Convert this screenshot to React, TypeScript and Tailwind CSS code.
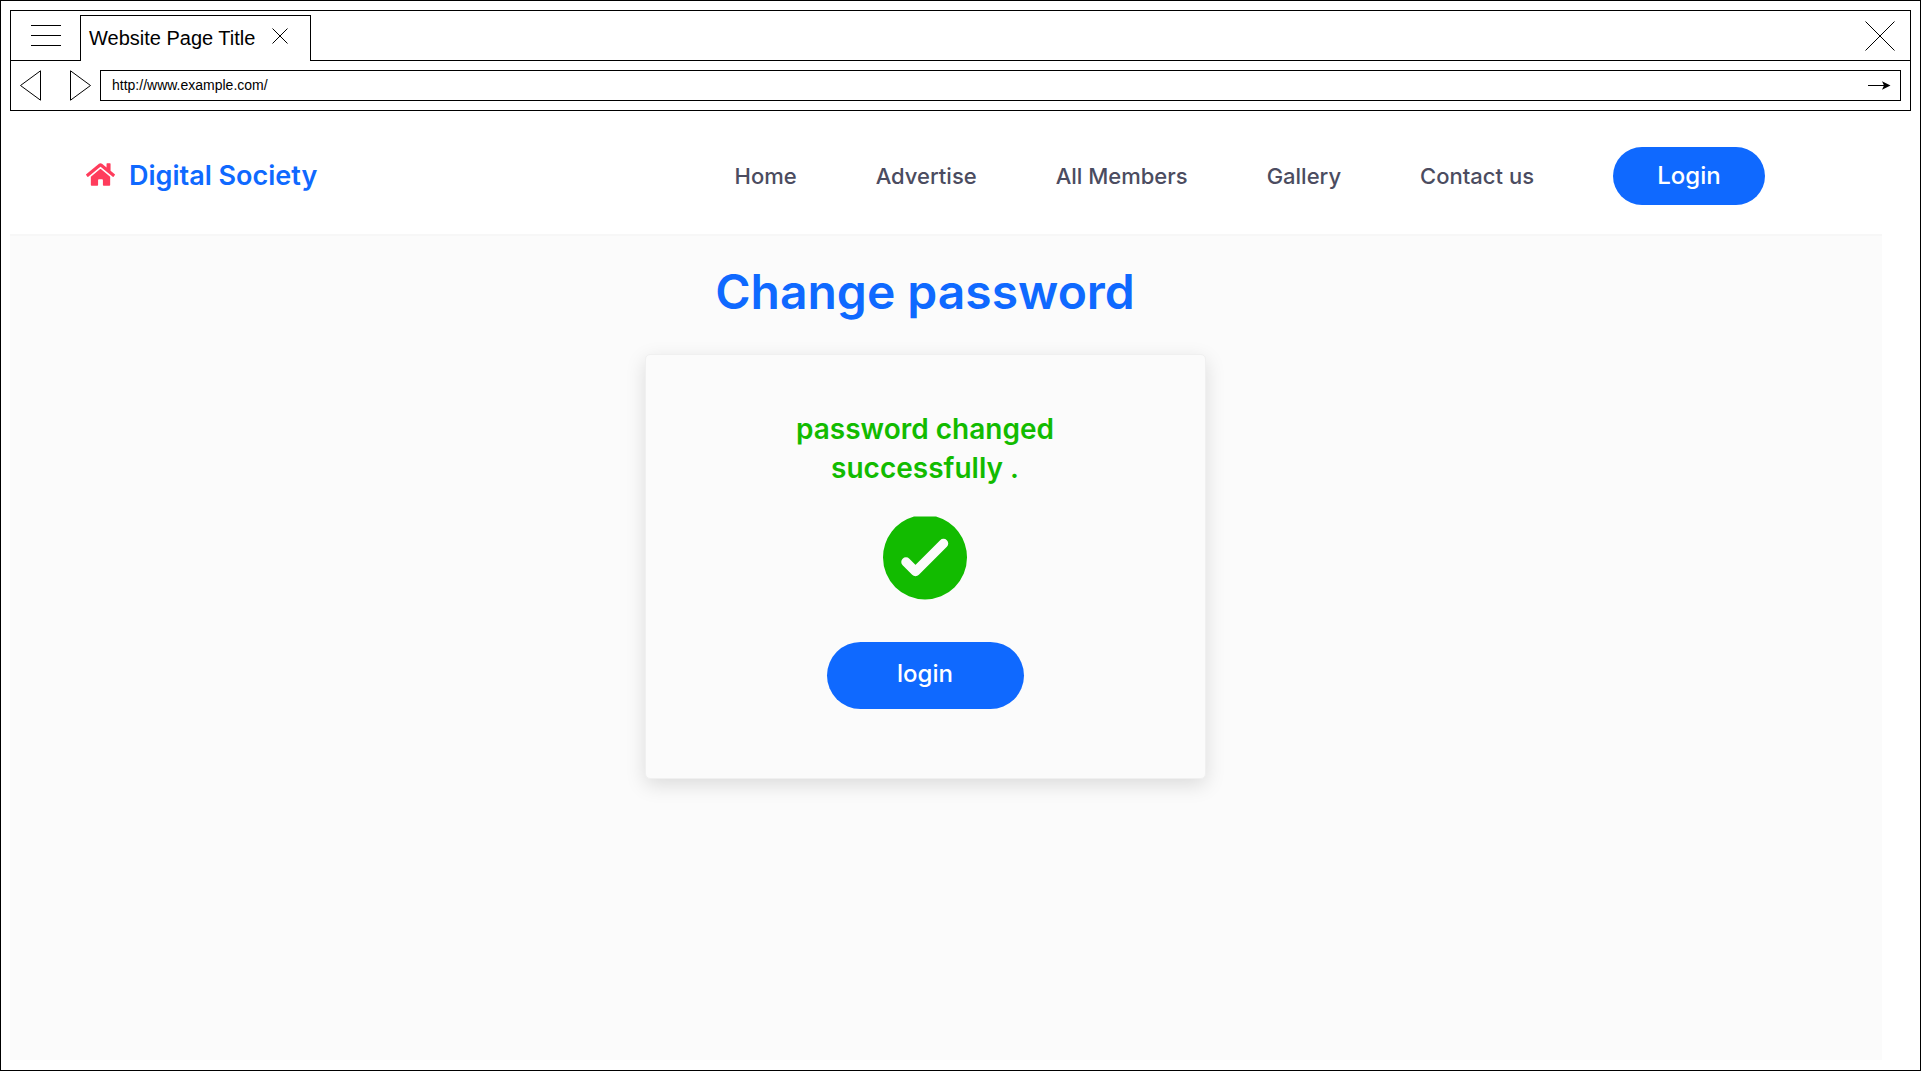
import React from "react";
import { FaHome } from "react-icons/fa";

const links = ["Home", "Advertise", "All Members", "Gallery", "Contact us"];

function BrowserBar() {
  return (
    <div className="border border-black bg-white font-['Liberation_Sans',Arial,sans-serif] text-black">
      <div className="flex h-[50px] items-stretch">
        <div className="flex w-[69px] items-center border-b border-black pl-5">
          <button type="button" aria-label="Menu" className="block">
            <svg width="30" height="21" viewBox="0 0 30 21" fill="none" stroke="black" shapeRendering="crispEdges">
              <path d="M0 .5H30M0 10.5H30M0 20.5H30" />
            </svg>
          </button>
        </div>
        <div className="mt-1 flex w-[231px] items-center border-x border-t border-black pb-0.5 pl-2">
          <span className="text-[20px] leading-6 whitespace-nowrap">Website Page Title</span>
          <button type="button" aria-label="Close tab" className="mb-1 ml-[17px] block">
            <svg width="16" height="16" viewBox="0 0 16 16" stroke="black" fill="none">
              <path d="M.5 .5L15.5 15.5M15.5 .5L.5 15.5" />
            </svg>
          </button>
        </div>
        <div className="flex flex-1 items-center justify-end border-b border-black pr-[15px]">
          <button type="button" aria-label="Close window" className="block">
            <svg width="30" height="30" viewBox="0 0 30 30" stroke="black" fill="none">
              <path d="M.5 .5L29.5 29.5M29.5 .5L.5 29.5" />
            </svg>
          </button>
        </div>
      </div>
      <div className="flex h-[49px] items-center px-[9px]">
        <button type="button" aria-label="Back" className="block">
          <svg width="22" height="31" viewBox="0 0 22 31" stroke="black" fill="none">
            <path d="M.5 15.5L20.5 .8V30.2Z" />
          </svg>
        </button>
        <button type="button" aria-label="Forward" className="ml-7 block">
          <svg width="22" height="31" viewBox="0 0 22 31" stroke="black" fill="none">
            <path d="M.5 .8L20.5 15.5L.5 30.2Z" />
          </svg>
        </button>
        <div className="ml-2 flex h-[31px] flex-1 items-center border border-black pr-[9px] pl-[11px]">
          <input
            type="text"
            aria-label="Address"
            defaultValue="http://www.example.com/"
            className="min-w-0 flex-1 bg-transparent pb-0.5 text-[14px] leading-5 outline-none"
          />
          <button type="button" aria-label="Go" className="block">
            <svg width="23" height="9" viewBox="0 0 23 9">
              <path d="M0 4.5H16" stroke="black" />
              <path d="M14 0.3L22.5 4.5L14 8.7L16 4.5Z" fill="black" />
            </svg>
          </button>
        </div>
      </div>
    </div>
  );
}

function SiteHeader() {
  return (
    <header className="mr-[70px] flex h-[123px] items-center justify-between px-[76px] pt-[7px]">
      <a href="#" className="flex items-center gap-[14px] text-[27px] leading-8 font-semibold text-[#0f69ff]">
        <FaHome className="mb-1 size-[29px] text-[#ff3c5c]" aria-hidden="true" />
        Digital Society
      </a>
      <nav className="flex items-center gap-[79px]">
        {links.map((label) => (
          <a key={label} href="#" className="text-[22px] leading-8 font-medium whitespace-nowrap text-[#4b4c60]">
            {label}
          </a>
        ))}
        <button type="button" className="h-[58px] w-[152px] rounded-full bg-[#0f69ff] text-[24px] font-medium text-white">
          Login
        </button>
      </nav>
    </header>
  );
}

function SuccessIcon() {
  return (
    <svg width="84" height="84" viewBox="0 0 84 84" role="img" aria-label="Success">
      <path d="M31 .5H53A42.5 42.5 0 0 1 84 41.5A42 42 0 0 1 0 41.5A42.5 42.5 0 0 1 31 .5Z" fill="#12bb00" />
      <path
        d="M23 46L32.5 55.5L60.5 27.5"
        fill="none"
        stroke="#fbfbfb"
        strokeWidth="9.5"
        strokeLinecap="round"
        strokeLinejoin="round"
      />
    </svg>
  );
}

export default function App() {
  return (
    <div className="mr-px flex min-h-screen flex-col border border-black bg-white p-[9px] pb-[10px] font-[Inter,sans-serif]">
      <BrowserBar />
      <SiteHeader />
      <main className="mr-[29px] flex flex-1 flex-col items-center border-t-2 border-[#f7f7f7] bg-[#fbfbfb] pt-[26px] pr-[42px]">
        <h1 className="text-[48px] leading-[60px] font-semibold text-[#0f69ff]">Change password</h1>
        <section className="mt-8 flex h-[425px] w-[561px] flex-col items-center rounded-[5px] border border-[#f0f0f0] bg-[#fbfbfb] pt-[55px] shadow-[0_6px_20px_rgba(0,0,0,0.13)]">
          <p className="w-[280px] text-center text-[28px] leading-[39px] font-semibold text-[#12bb00]">
            password changed successfully .
          </p>
          <div className="mt-7">
            <SuccessIcon />
          </div>
          <button type="button" className="mt-[42px] h-[67px] w-[197px] shrink-0 rounded-full bg-[#0f69ff] pb-1 text-[24px] font-medium text-white">
            login
          </button>
        </section>
      </main>
    </div>
  );
}
